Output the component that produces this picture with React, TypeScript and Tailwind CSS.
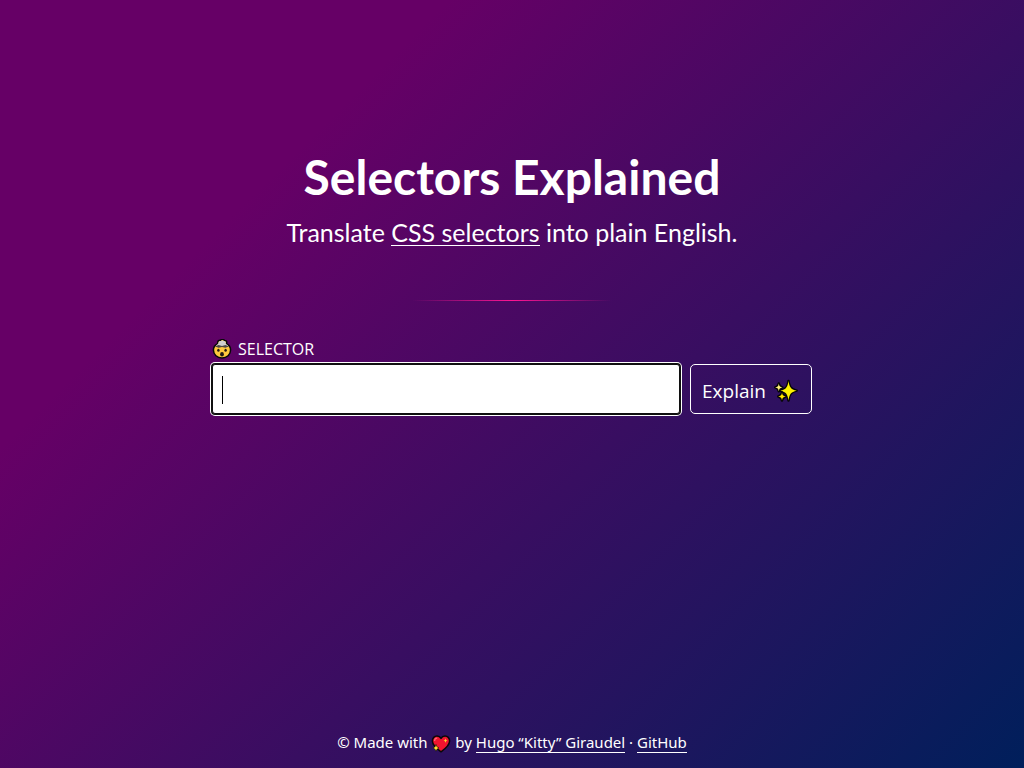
import { useState } from "react";

function ExplodingHead() {
  return (
    <svg aria-hidden="true" viewBox="0 0 20 20" className="h-5 w-5 shrink-0">
      <path
        d="M6 4.500C5 2 7 1 8.500 1.200c1-.9 3-.9 4 .2 2 0 2.800 1.600 1.800 3.400C17 6 18.600 8.400 18.600 11c0 4.600-3.800 8-8.600 8s-8.600-3.400-8.600-8C1.400 8.400 3 6 6 4.500Z"
        fill="#ffc83d"
        stroke="#080808"
        strokeWidth="1.500"
        strokeLinejoin="round"
      />
      <path d="M3.400 7.400C5 5.600 6.500 5 6.500 3.500 7 1.800 8.500 2 9 2c1-.6 2-.6 3 .1 1.600 0 1.900 1 1.600 2 .2 1.400 1.700 1.700 3 3.300L13 8.200l-3-.8-3 .8Z" fill="#cfcfcf" />
      <path d="m3 7.600 3.500-1.500L10 7l3.500-.9L17 7.600l-3.700 1.200L10 8l-3.300.8Z" fill="#4c4743" />
      <ellipse cx="6.400" cy="11.200" rx="1.200" ry="1.500" fill="#241b14" />
      <ellipse cx="13.600" cy="11.200" rx="1.200" ry="1.500" fill="#241b14" />
      <ellipse cx="10" cy="15.200" rx="1.900" ry="2.200" fill="#241b14" />
    </svg>
  );
}

function Sparkles() {
  return (
    <svg aria-hidden="true" viewBox="0 0 24 24" className="h-6 w-6 shrink-0">
      <g stroke="#050505" strokeWidth="2.400" strokeLinejoin="round" paintOrder="stroke">
        <path d="M14.500 2c.8 6 2.200 8.400 8.200 9.700-6 1.300-7.400 3.700-8.200 9.900-.8-6.200-2.200-8.600-8.200-9.900 6-1.300 7.400-3.700 8.200-9.700Z" fill="#fff200" />
        <path d="M4.800 4.500c.4 2.700 1 3.500 3.600 3.900-2.600.4-3.200 1.200-3.600 3.900-.4-2.700-1-3.500-3.600-3.900 2.600-.4 3.200-1.200 3.600-3.900Z" fill="#fff07a" />
        <path d="M8 13.500c.4 2.600 1 3.600 3.800 4-2.800.4-3.400 1.400-3.800 4-.4-2.600-1-3.600-3.800-4 2.800-.4 3.400-1.400 3.800-4Z" fill="#ffe500" />
      </g>
    </svg>
  );
}

function SparklingHeart() {
  return (
    <svg aria-hidden="true" viewBox="0 0 20 20" className="inline-block h-5 w-5 align-middle">
      <path d="M10 17.800C6 15 1.500 11.500 1.400 7 1.300 4 3.500 2 6 2c1.800 0 3.200.9 4 2.400C10.800 2.900 12.200 2 14 2c2.500 0 4.700 2 4.600 5-.1 4.500-4.600 8-8.600 10.800Z" fill="#f0142f" stroke="#080808" strokeWidth="1.500" strokeLinejoin="round" />
      <path d="M3.600 7C3.600 5.200 4.600 4.200 6.200 4.200" fill="none" stroke="#ff6572" strokeWidth="1.300" />
      <path d="M14.500 4.200c.3 1.600.7 2 2 2.400-1.300.4-1.700.8-2 2.400-.3-1.600-.7-2-2-2.400 1.300-.4 1.700-.8 2-2.400Z" fill="#ffd42a" />
      <path d="M5 10.700c.4 2.100 1 2.700 2.800 3.200C6 14.400 5.400 15 5 17.100c-.4-2.100-1-2.700-2.800-3.200 1.800-.5 2.400-1.100 2.800-3.200Z" fill="#ffe12e" stroke="#080808" strokeWidth="1" paintOrder="stroke" />
    </svg>
  );
}

export default function App() {
  const [selector, setSelector] = useState("");

  return (
    <div className="flex min-h-screen flex-col bg-[linear-gradient(135deg,#660066_25%,#001f5b)] font-['Open_Sans',sans-serif] text-white">
      <main className="mx-auto w-full max-w-[600px] flex-1 pt-[148px]">
        <header className="text-center font-['Lato',sans-serif]">
          <h1 className="text-[48px] leading-[58px] font-bold">Selectors Explained</h1>
          <p className="mt-2 text-[25px] leading-9">
            Translate{" "}
            <a href="#selectors" className="inline-block border-b border-white leading-[26px]">
              CSS selectors
            </a>{" "}
            into plain English.
          </p>
        </header>
        <hr className="mx-auto mt-[50px] h-px w-[200px] border-0 bg-[linear-gradient(to_right,transparent,#ff1493,transparent)]" />
        <form className="mt-9" onSubmit={(event) => event.preventDefault()}>
          <label htmlFor="selector" className="flex items-center gap-1.5 leading-6 uppercase">
            <ExplodingHead />
            Selector
          </label>
          <div className="mt-[3px] flex gap-2.5">
            <div className="relative min-w-0 flex-1">
              <input
                id="selector"
                type="text"
                autoFocus
                autoComplete="off"
                value={selector}
                onChange={(event) => setSelector(event.target.value)}
                className="h-[50px] w-full rounded-[3px] border border-[#101010] bg-white px-[9px] text-xl text-black caret-black shadow-[0_0_0_1px_#101010,0_0_0_2px_#ffffff] outline-none"
              />
              {selector === "" && (
                <span aria-hidden="true" className="pointer-events-none absolute top-3 left-2.5 h-7 w-px bg-black" />
              )}
            </div>
            <button
              type="submit"
              className="flex h-[50px] w-[122px] items-center gap-2 rounded-[5px] border border-white pt-1 pl-[11px] text-[19px]"
            >
              Explain
              <Sparkles />
            </button>
          </div>
        </form>
      </main>
      <footer className="pb-3.5 text-center font-['Noto_Sans',sans-serif] text-[15px] leading-5">
        © Made with <SparklingHeart /> by{" "}
        <a href="#author" className="inline-block border-b border-white">
          Hugo “Kitty” Giraudel
        </a>{" "}
        ·{" "}
        <a href="#github" className="inline-block border-b border-white">
          GitHub
        </a>
      </footer>
    </div>
  );
}
